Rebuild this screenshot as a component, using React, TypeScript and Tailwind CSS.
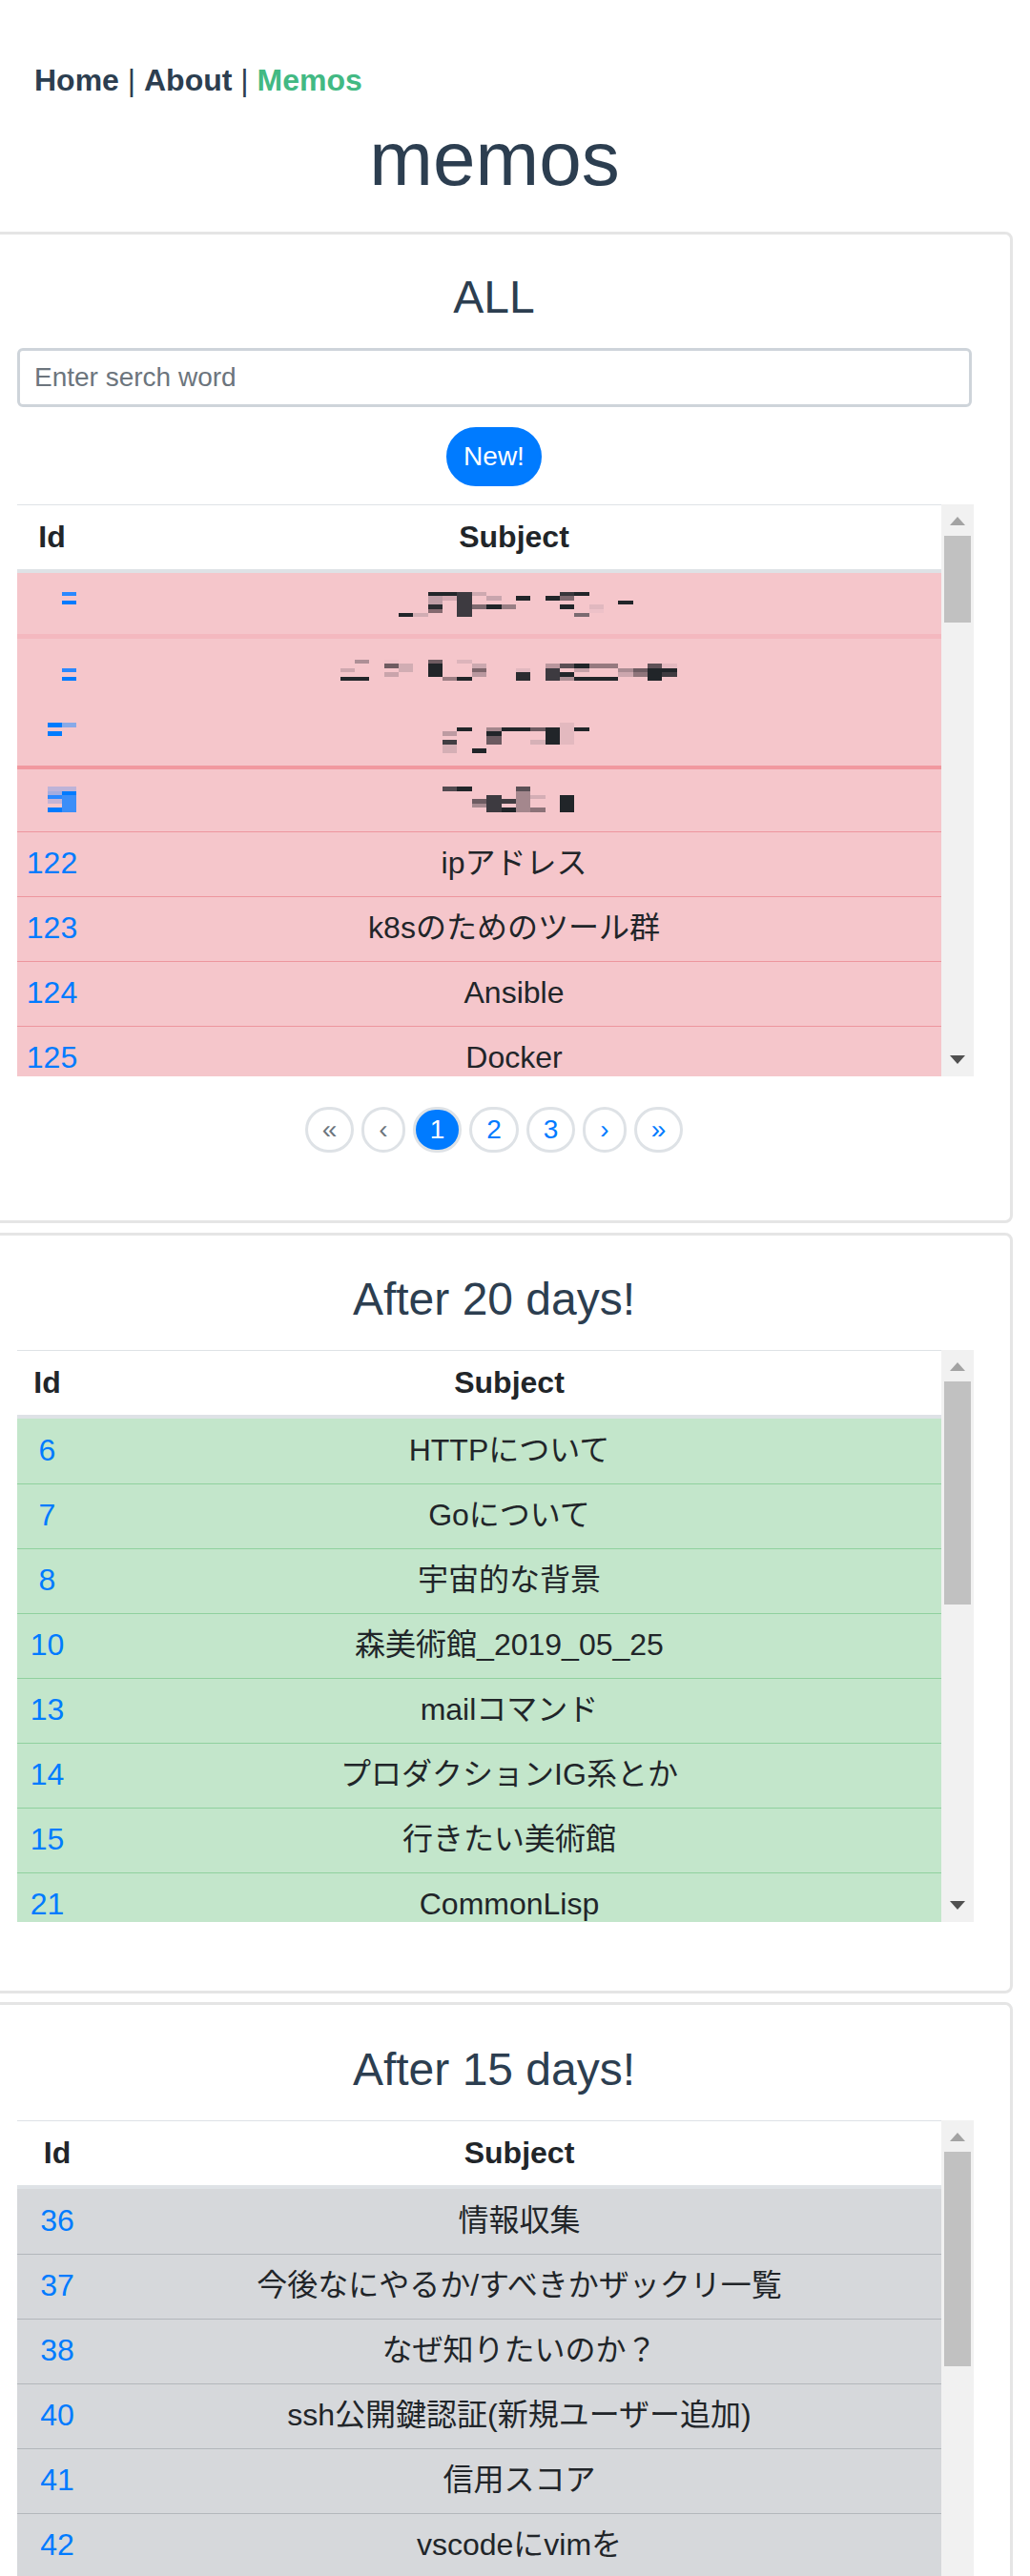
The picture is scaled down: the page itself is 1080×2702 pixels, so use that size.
type Rect = [number, number, number, number, string];

type Row = [number, string];

const pink: Row[] = [
  [122, 'ipアドレス'],
  [123, 'k8sのためのツール群'],
  [124, 'Ansible'],
  [125, 'Docker'],
];

const green: Row[] = [
  [6, 'HTTPについて'],
  [7, 'Goについて'],
  [8, '宇宙的な背景'],
  [10, '森美術館_2019_05_25'],
  [13, 'mailコマンド'],
  [14, 'プロダクションIG系とか'],
  [15, '行きたい美術館'],
  [21, 'CommonLisp'],
];

const gray: Row[] = [
  [36, '情報収集'],
  [37, '今後なにやるか/すべきかザックリ一覧'],
  [38, 'なぜ知りたいのか？'],
  [40, 'ssh公開鍵認証(新規ユーザー追加)'],
  [41, '信用スコア'],
  [42, 'vscodeにvimを'],
];

// mosaic blocks, in 3x crop coordinates
const mosaicLeft: Rect[] = [
  [297, 33, 387, 45, '#212529'], [387, 33, 435, 111, '#3d3a40'], [297, 45, 342, 72, '#bf9ea6'],
  [342, 45, 387, 60, '#d5a9b1'], [435, 33, 480, 45, '#cea9b0'], [480, 45, 528, 60, '#c8a5ad'],
  [297, 72, 342, 87, '#2b2c30'], [297, 87, 342, 99, '#84696f'], [204, 99, 249, 111, '#212529'],
  [249, 99, 297, 111, '#d1adb3'], [435, 72, 480, 87, '#7f6a70'], [480, 72, 528, 87, '#212529'],
  [528, 72, 570, 87, '#987e84'],
  [66, 246, 111, 258, '#ad8f96'], [21, 273, 66, 285, '#cfa8af'], [21, 300, 111, 312, '#212529'],
  [159, 246, 204, 258, '#efc2c8'], [159, 258, 204, 273, '#6e5b61'], [204, 258, 249, 285, '#d1adb3'],
  [159, 285, 204, 300, '#c9a4ab'], [297, 246, 342, 258, '#6f5c62'], [297, 258, 342, 300, '#212529'],
  [342, 300, 387, 312, '#9c7d83'], [387, 300, 435, 312, '#212529'], [387, 246, 435, 258, '#dcb4bb'],
  [435, 258, 480, 273, '#cba8af'], [435, 273, 480, 285, '#7e666c'], [435, 285, 480, 300, '#b9989f'],
  [387, 459, 435, 471, '#212529'], [342, 471, 387, 486, '#bd9ba2'], [342, 498, 387, 513, '#413e43'],
  [342, 513, 387, 540, '#d5afb5'], [435, 525, 480, 540, '#212529'], [480, 459, 528, 471, '#a3868c'],
  [480, 471, 528, 486, '#212529'], [480, 486, 528, 513, '#6b5a60'], [528, 459, 570, 471, '#212529'],
  [342, 645, 387, 660, '#524a50'], [387, 645, 435, 660, '#212529'], [435, 684, 480, 699, '#6e5c62'],
  [435, 699, 480, 711, '#a78a90'], [480, 672, 528, 726, '#3d3a40'], [528, 684, 570, 699, '#403c41'],
  [528, 711, 570, 726, '#212529'],
];

const mosaicRight: Rect[] = [
  [0, 72, 33, 87, '#987e84'], [33, 45, 78, 60, '#212529'], [126, 45, 171, 60, '#212529'],
  [171, 33, 216, 45, '#38363b'], [171, 45, 216, 60, '#7d686e'], [216, 33, 264, 45, '#212529'],
  [171, 72, 216, 87, '#212529'], [216, 99, 264, 111, '#7a6a70'], [264, 72, 309, 87, '#e0b8bf'],
  [264, 87, 309, 99, '#edc1c8'], [354, 60, 402, 72, '#212529'],
  [33, 273, 78, 285, '#e2b8bf'], [33, 285, 78, 312, '#2b2c30'], [126, 258, 171, 273, '#b9969d'],
  [126, 273, 171, 312, '#3d3a40'], [171, 258, 216, 273, '#5b4e54'], [216, 258, 264, 273, '#212529'],
  [216, 273, 264, 285, '#c6a1a8'], [264, 258, 354, 273, '#96797f'], [171, 285, 216, 300, '#212529'],
  [171, 300, 216, 312, '#ad8f95'], [216, 300, 354, 312, '#212529'], [354, 273, 402, 285, '#aa8c93'],
  [354, 285, 402, 300, '#cca7ae'], [402, 273, 447, 285, '#6e5c62'], [402, 285, 447, 300, '#8f757b'],
  [447, 258, 492, 273, '#5f5157'], [447, 273, 492, 312, '#212529'], [492, 258, 540, 273, '#e4b9c0'],
  [492, 273, 540, 285, '#212529'], [492, 285, 540, 300, '#403c41'],
  [0, 459, 78, 471, '#212529'], [78, 459, 126, 471, '#6e5c62'], [78, 498, 126, 513, '#d6b1b7'],
  [126, 459, 171, 513, '#212529'], [171, 444, 216, 513, '#e3b9bf'], [216, 459, 264, 471, '#212529'],
  [0, 684, 33, 699, '#403c41'], [0, 711, 33, 726, '#212529'], [33, 645, 78, 660, '#5a4f55'],
  [33, 660, 78, 726, '#a4878d'], [78, 672, 126, 684, '#d4aeb5'], [78, 711, 126, 726, '#8c7278'],
  [171, 672, 216, 726, '#212529'],
];

// same crop scale, origin 0,780 for all the id blocks
const mosaicIds: Rect[] = [
  [195, -477, 240, -465, '#2a88ff'], [195, -450, 240, -438, '#007bff'],
  [195, -237, 240, -225, '#2a88ff'], [195, -210, 240, -198, '#007bff'],
  [150, -66, 195, -51, '#007bff'], [195, -66, 240, -51, '#88a9e8'], [150, -39, 195, -24, '#007bff'],
  [150, 135, 240, 150, '#bdb3d8'], [150, 150, 195, 162, '#a4acdf'], [195, 150, 240, 162, '#007bff'],
  [150, 162, 195, 174, '#2a88ff'], [195, 162, 240, 216, '#3b8ef8'], [150, 174, 195, 189, '#c4b4d5'],
  [150, 201, 195, 216, '#007bff'],
];

function Blocks({ rects, x, y }: { rects: Rect[]; x: number; y: number }) {
  return (
    <g transform={`translate(${x} ${y}) scale(${1 / 3})`}>
      {rects.map(([x0, y0, x1, y1, c], i) => (
        <rect key={i} x={x0} y={y0} width={x1 - x0} height={y1 - y0} fill={c} />
      ))}
    </g>
  );
}

function PixelRows() {
  return (
    <div className="relative bg-[#f5c6cb]">
      <div className="h-[64px]" />
      <div className="h-[71px] border-t-[5px] border-[#f4b8bf]" />
      <div className="h-[67px]" />
      <div className="h-[69px] border-t-4 border-[#f1989f]" />
      <svg className="absolute left-0 top-0 w-[969px] h-[271px]" viewBox="18 601 969 271" shapeRendering="crispEdges">
        <Blocks rects={mosaicLeft} x={350} y={610} />
        <Blocks rects={mosaicRight} x={530} y={610} />
        <Blocks rects={mosaicIds} x={0} y={780} />
      </svg>
    </div>
  );
}

function Scrollbar({ thumbHeight }: { thumbHeight: number }) {
  return (
    <div className="w-[34px] shrink-0 bg-[#f1f1f1] flex flex-col items-center">
      <svg className="mt-[13px] shrink-0" width="16" height="9" viewBox="0 0 16 9">
        <path d="M8 0L16 9H0Z" fill="#a3a3a3" />
      </svg>
      <div className="w-[28px] mt-[11px] bg-[#c1c1c1]" style={{ height: thumbHeight }} />
      <svg className="mt-auto mb-[13px] shrink-0" width="16" height="9" viewBox="0 0 16 9">
        <path d="M0 0H16L8 9Z" fill="#505050" />
      </svg>
    </div>
  );
}

function MemoTable({
  rows,
  idWidth,
  thumbHeight,
  rowClass,
  children,
}: {
  rows: Row[];
  idWidth: string;
  thumbHeight: number;
  rowClass: string;
  children?: React.ReactNode;
}) {
  return (
    <div className="flex h-[600px] overflow-hidden">
      <div className="flex-1 min-w-0">
        <div className="flex h-[72px] pb-[2px] border-t border-b-4 border-[#dee2e6] bg-white items-center font-bold text-[#212529]">
          <div className={`${idWidth} shrink-0 text-center`}>Id</div>
          <div className="flex-1 text-center">Subject</div>
        </div>
        {children}
        {rows.map(([id, subject], i) => (
          <div key={id} className={`flex h-[68px] pb-[3px] items-center text-[#212529] ${rowClass} ${i === 0 && !children ? 'border-t-0' : 'border-t'}`}>
            <div className={`${idWidth} shrink-0 text-center text-[#007bff]`}>{id}</div>
            <div className="flex-1 text-center">{subject}</div>
          </div>
        ))}
      </div>
      <Scrollbar thumbHeight={thumbHeight} />
    </div>
  );
}

function Pager() {
  const base = 'px-[15px] py-[7px] rounded-full border-[3px] leading-[28px] border-[#dee2e6]';
  return (
    <div className="flex justify-center gap-2 mt-[32px] pr-[3px] text-[28px]">
      <span className={`${base} text-[#6c757d]`}>«</span>
      <span className={`${base} text-[#6c757d]`}>‹</span>
      <span className={`${base} bg-[#007bff] border-[#007bff] text-white`}>1</span>
      <span className={`${base} text-[#007bff]`}>2</span>
      <span className={`${base} text-[#007bff]`}>3</span>
      <span className={`${base} text-[#007bff]`}>›</span>
      <span className={`${base} text-[#007bff]`}>»</span>
    </div>
  );
}

function Title({ children }: { children: React.ReactNode }) {
  return <h4 className="pr-[3px] text-[48px] leading-[58px] text-center text-[#2c3e50]">{children}</h4>;
}

export default function App() {
  return (
    <div className="h-[2702px] w-[1080px] overflow-hidden bg-white text-[32px] leading-[48px] font-['Liberation_Sans','Noto_Sans_CJK_JP',sans-serif]">
      <nav className="pt-[60px] pl-[36px] h-[108px] text-[#2c3e50]">
        <a className="font-bold">Home</a> | <a className="font-bold">About</a> | <a className="font-bold text-[#42b983]">Memos</a>
      </nav>
      <div className="-ml-[22px] w-[1084px]">
        <h1 className="mt-[11px] pr-[3px] h-[124px] text-[80px] leading-[96px] text-center text-[#2c3e50]">memos</h1>

        <section className="h-[1040px] rounded-lg border-[3px] border-[#e5e5e5] pl-[37px] pr-[38px] pt-[37px]">
          <Title>ALL</Title>
          <input
            placeholder="Enter serch word"
            className="mt-[24px] block w-[1001px] h-[62px] px-[15px] text-[28px] rounded-md border-[3px] border-[#ced4da] placeholder:text-[#6c757d] outline-none"
          />
          <div className="mt-[21px] pr-[3px] flex justify-center">
            <button className="h-[62px] px-4 rounded-full border-2 border-[#007bff] bg-[#007bff] text-[28px] text-white">New!</button>
          </div>
          <div className="mt-[19px]">
            <MemoTable rows={pink} idWidth="w-[73px]" thumbHeight={91} rowClass="bg-[#f5c6cb] border-[#ed969e]">
              <PixelRows />
            </MemoTable>
          </div>
          <Pager />
        </section>

        <section className="mt-[10px] h-[798px] rounded-lg border-[3px] border-[#e5e5e5] pl-[37px] pr-[38px] pt-[38px]">
          <Title>After 20 days!</Title>
          <div className="mt-[24px]">
            <MemoTable rows={green} idWidth="w-[63px]" thumbHeight={234} rowClass="bg-[#c3e6cb] border-[#8fd19e]" />
          </div>
        </section>

        <section className="mt-[9px] h-[700px] rounded-lg border-[3px] border-[#e5e5e5] pl-[37px] pr-[38px] pt-[39px]">
          <Title>After 15 days!</Title>
          <div className="mt-[24px]">
            <MemoTable rows={gray} idWidth="w-[84px]" thumbHeight={225} rowClass="bg-[#d6d8db] border-[#b3b7bb]" />
          </div>
        </section>
      </div>
    </div>
  );
}
